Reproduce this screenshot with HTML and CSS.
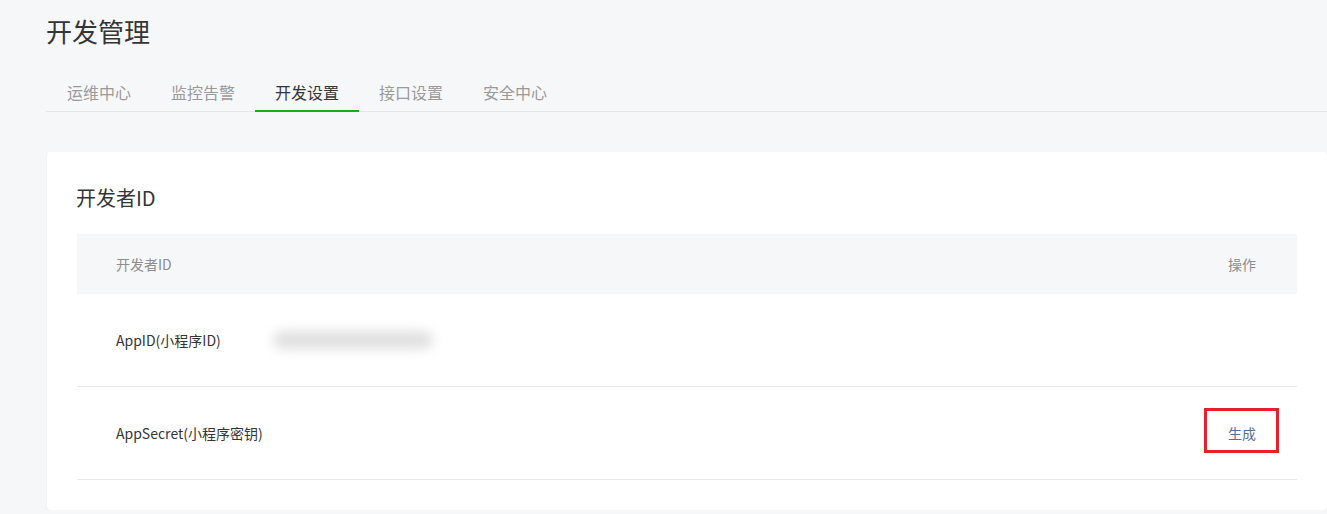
FILE: index.html
```html
<!DOCTYPE html>
<html lang="zh-CN">
<head>
<meta charset="utf-8">
<title>开发管理</title>
<link rel="stylesheet" href="styles.css">
</head>
<body>
<div class="page">
  <h1 class="page-title">开发管理</h1>
  <nav class="tabs">
    <a class="tab">运维中心</a>
    <a class="tab">监控告警</a>
    <a class="tab active">开发设置</a>
    <a class="tab">接口设置</a>
    <a class="tab">安全中心</a>
  </nav>
  <section class="card">
    <h2 class="card-title">开发者ID</h2>
    <div class="table">
      <div class="thead">
        <span class="col-main">开发者ID</span>
        <span class="col-op">操作</span>
      </div>
      <div class="row">
        <div class="col-main">
          <span class="label">AppID(小程序ID)</span>
          <span class="blurred"></span>
        </div>
        <div class="col-op"></div>
      </div>
      <div class="row">
        <div class="col-main">
          <span class="label">AppSecret(小程序密钥)</span>
        </div>
        <div class="col-op">
          <a class="link">生成</a>
          <span class="highlight"></span>
        </div>
      </div>
    </div>
  </section>
</div>
</body>
</html>
```
FILE: styles.css
```css
* { box-sizing: border-box; }
html, body { margin: 0; padding: 0; }
body {
  background: #f6f7f9;
  font-family: "Noto Sans CJK SC", "Noto Sans", sans-serif;
  color: #353535;
  overflow: hidden;
}
.page {
  padding: 12px 0 0 47px;
}
.page-title {
  margin: 0 0 0 -1px;
  font-size: 26px;
  font-weight: 400;
  line-height: 38px;
  color: #353535;
}
.tabs {
  display: flex;
  margin-top: 24px;
  margin-left: -1px;
  padding-left: 1px;
  border-bottom: 1px solid #e4e6ea;
}
.tab {
  display: block;
  width: 104px;
  text-align: center;
  font-size: 16px;
  line-height: 36px;
  color: #9a9a9a;
  border-bottom: 2px solid transparent;
  margin-bottom: -1px;
  cursor: pointer;
}
.tab.active {
  color: #353535;
  border-bottom-color: #1aad19;
}
.card {
  margin-top: 40px;
  background: #fff;
  border-radius: 4px;
  box-shadow: 0 1px 2px rgba(0,0,0,0.06);
  padding: 30px;
}
.card-title {
  margin: 0 0 20px -1px;
  font-size: 20px;
  font-weight: 400;
  line-height: 32px;
  color: #353535;
}
.thead {
  display: flex;
  align-items: center;
  justify-content: space-between;
  height: 60px;
  background: #f6f7f9;
  padding: 0 41px 0 39px;
  font-size: 14px;
  color: #8d8d8d;
}
.row {
  display: flex;
  align-items: center;
  justify-content: space-between;
  height: 93px;
  padding: 0 41px 0 39px;
  border-bottom: 1px solid #e7e7eb;
  font-size: 14px;
}
.col-main {
  display: flex;
  align-items: center;
}
.label {
  color: #353535;
}
.blurred {
  display: inline-block;
  width: 160px;
  height: 18px;
  margin-left: 52px;
  border-radius: 9px;
  background: #e0e0e0;
  filter: blur(6px);
}
.col-op {
  position: relative;
}
.link {
  color: #576b95;
  cursor: pointer;
}
.highlight {
  position: absolute;
  left: -24px;
  top: -15px;
  width: 75px;
  height: 45px;
  border: 3px solid #e8202a;
}
```
